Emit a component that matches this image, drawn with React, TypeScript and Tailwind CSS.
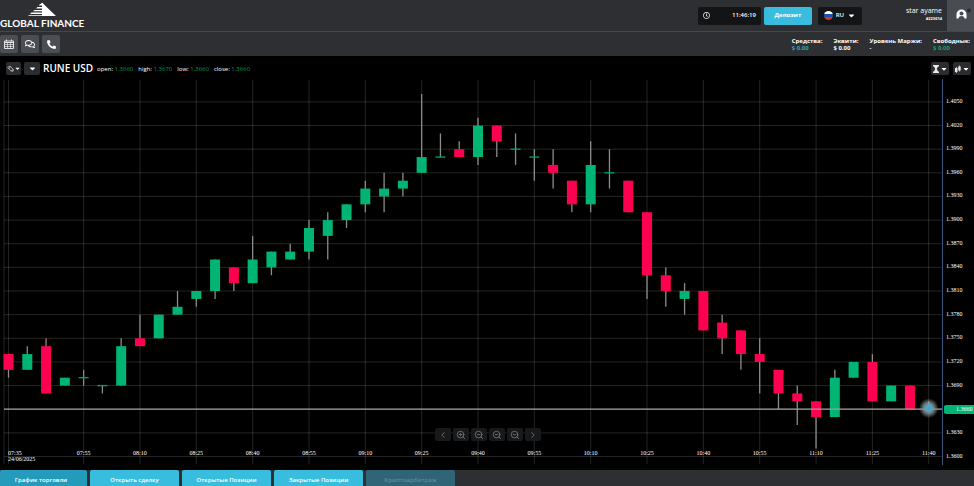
import { ChevronLeft, ChevronRight, ZoomIn, ZoomOut } from "lucide-react";
import { FaCaretDown, FaPhoneAlt, FaRegClock, FaRegComments } from "react-icons/fa";

// open, close, high, low: steps of 0.0010 above 1.3600
const candles = [
  [13, 11, 13, 10], [11, 13, 14, 11], [14, 8, 15, 8], [9, 10, 10, 9], [10, 10, 11, 9],
  [9, 9, 9, 8], [9, 14, 15, 9], [15, 14, 18, 14], [15, 18, 18, 15], [18, 19, 21, 18],
  [20, 21, 21, 19], [21, 25, 25, 20], [24, 22, 24, 21], [22, 25, 28, 22], [24, 26, 26, 23],
  [25, 26, 27, 25], [26, 29, 30, 25], [28, 30, 31, 25], [30, 32, 32, 29], [32, 34, 35, 31],
  [33, 34, 36, 31], [34, 35, 36, 33], [36, 38, 46, 36], [38, 38, 41, 38], [39, 38, 40, 38],
  [38, 42, 43, 37], [42, 40, 42, 38], [39, 39, 41, 37], [38, 38, 39, 35], [37, 36, 39, 34],
  [35, 32, 35, 31], [32, 37, 40, 31], [36, 36, 39, 34], [35, 31, 35, 31], [31, 23, 31, 20],
  [23, 21, 24, 19], [20, 21, 22, 18], [21, 16, 21, 16], [17, 15, 18, 13], [16, 13, 16, 11],
  [13, 12, 15, 8], [11, 8, 11, 6], [8, 7, 9, 4], [7, 5, 7, 1], [5, 10, 11, 5],
  [10, 12, 12, 10], [12, 7, 13, 7], [7, 9, 9, 7], [9, 6, 9, 6],
];

const times = ["07:55", "08:10", "08:25", "08:40", "08:55", "09:10", "09:25", "09:40", "09:55", "10:10", "10:25", "10:40", "10:55", "11:10", "11:25", "11:40"];
const prices = Array.from({ length: 16 }, (_, i) => i * 3);

const xAt = (i: number) => 8.5 + i * 18.78;
const yAt = (v: number) => 377.5 - v * 7.88;

function Chart() {
  return (
    <svg viewBox="0 0 974 391" className="block w-full h-auto" role="img" aria-label="RUNE USD">
      <g stroke="#fff" strokeOpacity="0.14">
        {prices.map((v) => (
          <line key={v} x1="4" x2="942" y1={yAt(v)} y2={yAt(v)} />
        ))}
        <line x1="4" x2="4" y1="1" y2="385" />
        <line x1={xAt(0)} x2={xAt(0)} y1="1" y2="385" />
        {times.map((t, i) => (
          <line key={t} x1={xAt(4 + i * 3)} x2={xAt(4 + i * 3)} y1="1" y2="385" />
        ))}
      </g>
      {candles.map(([open, close, high, low], i) => {
        const top = Math.max(open, close);
        const height = Math.abs(open - close) * 7.88;
        return (
          <g key={i}>
            <line x1={xAt(i)} x2={xAt(i)} y1={yAt(high)} y2={yAt(low)} stroke="#8c8c8c" strokeWidth="1.3" />
            {height > 0 ? (
              <rect x={xAt(i) - 5} y={yAt(top)} width="10" height={height} fill={close > open ? "#00b574" : "#ff0050"} />
            ) : (
              <line x1={xAt(i) - 5} x2={xAt(i) + 5} y1={yAt(top)} y2={yAt(top)} stroke="#00a56a" strokeWidth="1.3" />
            )}
          </g>
        );
      })}
      <line x1="4" x2="942" y1={yAt(6)} y2={yAt(6)} stroke="#a0a0a0" strokeWidth="1.3" />
      <line x1="942.5" x2="942.5" y1="0" y2="386" stroke="#33567a" />
      <defs>
        <radialGradient id="glow">
          <stop offset="0" stopColor="#2ba9d0" />
          <stop offset="0.25" stopColor="#4fa9c6" />
          <stop offset="0.5" stopColor="#84969c" stopOpacity="0.85" />
          <stop offset="1" stopColor="#8a9498" stopOpacity="0" />
        </radialGradient>
      </defs>
      <line x1={xAt(49)} x2={xAt(49)} y1={yAt(7)} y2={yAt(6)} stroke="#ccc" />
      <circle cx={xAt(49)} cy={yAt(6) - 1} r="10" fill="url(#glow)" />
      <path d="M944 330v-3l2-1h28v9h-28l-2-1z" fill="#00b574" />
      <g fill="#fff" fontSize="6" fontFamily="'Liberation Serif', serif">
        {prices.filter((v) => v !== 6).map((v) => (
          <text key={v} x="946" y={yAt(v) + 1}>{(1.36 + v / 1000).toFixed(4)}</text>
        ))}
        <text x="956" y="332">1.3660</text>
        <text x="8" y="376">07:35</text>
        <text x="8" y="382">24/06/2025</text>
        {times.map((t, i) => (
          <text key={t} x={xAt(4 + i * 3)} y="376" textAnchor="middle">{t}</text>
        ))}
      </g>
    </svg>
  );
}

const quotes = [["open:", "1.3660"], ["high:", "1.3670"], ["low:", "1.3660"], ["close:", "1.3660"]];

export default function App() {
  return (
    <div className="bg-black text-white font-['Open_Sans',sans-serif] overflow-hidden">
      <header className="flex justify-between h-8 bg-[#2e2f33] border-b border-[#46474b]">
        <a href="#" className="flex flex-col items-center">
          <svg viewBox="0 0 28 16" className="w-7 h-4 mt-px" fill="#fff">
            <path d="M12.5 3.5Q14 .5 15.5 3L28 15H14V4z" />
            <path d="M12 3h2v1.500h-3.200zM9.500 6H14v1.500H8zM6.500 9H14v1.300H5zM3.500 11.600H14V13H2zM1 14.200h13v.8H0z" />
          </svg>
          <span className="font-['Lato',sans-serif] font-bold text-[10px] leading-3">GLOBAL FINANCE</span>
        </a>
        <div className="flex items-center">
          <div className="flex items-center justify-between w-[63px] h-[18px] px-[5px] bg-[#131416] rounded-xs">
            <FaRegClock size={7} />
            <span className="text-[6px] font-semibold">11:46:19</span>
          </div>
          <button className="w-12 h-[18px] ml-[3px] bg-[#39bddf] rounded-xs text-[6px] font-bold">Депозит</button>
          <button className="flex items-center justify-between w-11 h-[18px] ml-[6px] px-1.5 bg-[#131416] rounded-xs text-[6px] font-semibold">
            <svg viewBox="0 0 9 9" className="size-[9px] rounded-full">
              <path d="M0 0h9v3H0z" fill="#fff" />
              <path d="M0 3h9v3H0z" fill="#1c4fb0" />
              <path d="M0 6h9v3H0z" fill="#e02d2d" />
            </svg>
            RU
            <FaCaretDown size={9} />
          </button>
          <div className="flex flex-col items-end ml-11 mr-[5px] pb-1">
            <span className="text-[7px] leading-[10px]">star ayame</span>
            <span className="text-[4px] leading-[6px] font-bold">#223614</span>
          </div>
          <button aria-label="star ayame" className="flex items-center justify-center w-[27px] h-full pl-1 pb-1 bg-[#494c52]">
            <svg viewBox="0 0 16 12" className="w-4 h-3">
              <path d="M1.500 10.500V6.500a5 5 0 0 1 10 0v4z" fill="#fff" />
              <circle cx="6.500" cy="5.500" r="2" fill="#494c52" />
              <path d="M3.500 11q0-3 3-3t3 3z" fill="#494c52" />
              <circle cx="14" cy="2.500" r="2" fill="#2b2c30" />
            </svg>
          </button>
        </div>
      </header>

      <div className="flex justify-between h-6 bg-[#2e2f33]">
        <div className="flex items-center gap-[3px]">
          <button aria-label="calendar" className="flex items-center justify-center size-[18px] bg-[#4b4e54] rounded-xs">
            <svg viewBox="0 0 10 10" className="size-[10px]" fill="none" stroke="#e4e4e4">
              <path d="M.5 2h9v7.500h-9zM.5 3.500h9" />
              <path d="M2.500 .5v2M7.500 .5v2" />
              <path d="M1 5.500h8M1 7.500h8M3.500 4v5M6.500 4v5" strokeWidth=".7" />
            </svg>
          </button>
          <button aria-label="chat" className="flex items-center justify-center size-[18px] bg-[#4b4e54] rounded-xs"><FaRegComments size={10} /></button>
          <button aria-label="phone" className="flex items-center justify-center size-[18px] bg-[#4b4e54] rounded-xs"><FaPhoneAlt size={9} /></button>
        </div>
        <div className="flex gap-[11px] pt-1.5 pr-1 text-[6px] leading-[7px] font-bold">
          <div>Средства:<br /><span className="text-[#2aa5c9]">$ 0.00</span></div>
          <div>Эквити:<br />$ 0.00</div>
          <div>Уровень Маржи:<br />-</div>
          <div>Свободные:<br /><span className="text-[#08a568]">$ 0.00</span></div>
        </div>
      </div>

      <div className="flex items-center h-[23px] pl-1.5 pr-[3px] pt-0.5">
        <button aria-label="draw" className="flex items-center justify-center w-[15px] h-[13px] bg-[#2b2c30] rounded-xs">
          <svg viewBox="0 0 8 8" className="size-[7px]" fill="none" stroke="#c9c9c9">
            <path d="M1 3l2-2 4 4v2H5zM2 4l2-2M5 7l2-2" />
          </svg>
          <FaCaretDown size={7} />
        </button>
        <button aria-label="symbols" className="flex items-center justify-center w-4 h-[13px] ml-[3px] bg-[#2b2c30] rounded-xs"><FaCaretDown size={9} /></button>
        <h1 className="ml-[3px] text-[10px] font-semibold">RUNE USD</h1>
        <div className="flex gap-[5px] ml-1 pt-0.5 text-[6px] font-medium">
          {quotes.map(([name, value]) => (
            <span key={name}>{name} <span className="text-[#089b5a]">{value}</span></span>
          ))}
        </div>
        <button aria-label="interval" className="flex items-center justify-center w-[18px] h-[13px] ml-auto bg-[#2b2c30] rounded-xs">
          <svg viewBox="0 0 8 8" className="size-2" fill="#e8e8e8">
            <path d="M1 0h6v1.500H1zM1 6.500h6V8H1zM2 1.500h4L4.800 4 6 6.500H2L3.200 4z" />
          </svg>
          <FaCaretDown size={8} />
        </button>
        <button aria-label="chart type" className="flex items-center justify-center w-[18px] h-[13px] ml-1 bg-[#2b2c30] rounded-xs">
          <svg viewBox="0 0 8 8" className="size-2" fill="#e8e8e8">
            <path d="M1 3h2.500v4H1zM4.200 1.500h2.500v4H4.200zM2 2h.7v6H2zM5.200 .5h.7v6h-.7z" />
          </svg>
          <FaCaretDown size={8} />
        </button>
      </div>

      <div className="relative">
        <Chart />
        <div className="absolute bottom-[29px] left-1/2 -translate-x-1/2 flex gap-0.5 pl-0.5 text-[#77797d]">
          {[ChevronLeft, ZoomIn, ZoomOut, ZoomOut, ZoomOut, ChevronRight].map((Icon, i) => (
            <button key={i} className="flex items-center justify-center w-4 h-[13px] bg-[#18191b] rounded-xs"><Icon size={10} /></button>
          ))}
        </div>
      </div>

      <nav className="flex gap-[3px] h-4 bg-[#2e2f33] text-[6px] font-semibold">
        <button className="w-[87px] pt-1 pr-[5px] bg-[#259bbb] rounded-t-xs">График торговли</button>
        <button className="w-[89px] pt-1 bg-[#39bddf] rounded-t-xs">Открыть сделку</button>
        <button className="w-[89px] pt-1 bg-[#39bddf] rounded-t-xs">Открытые Позиции</button>
        <button className="w-[89px] pt-1 bg-[#39bddf] rounded-t-xs">Закрытые Позиции</button>
        <button disabled className="w-[89px] pt-1 bg-[#2f6577] text-[#6b8790] rounded-t-xs">Криптоарбитраж</button>
      </nav>
    </div>
  );
}
